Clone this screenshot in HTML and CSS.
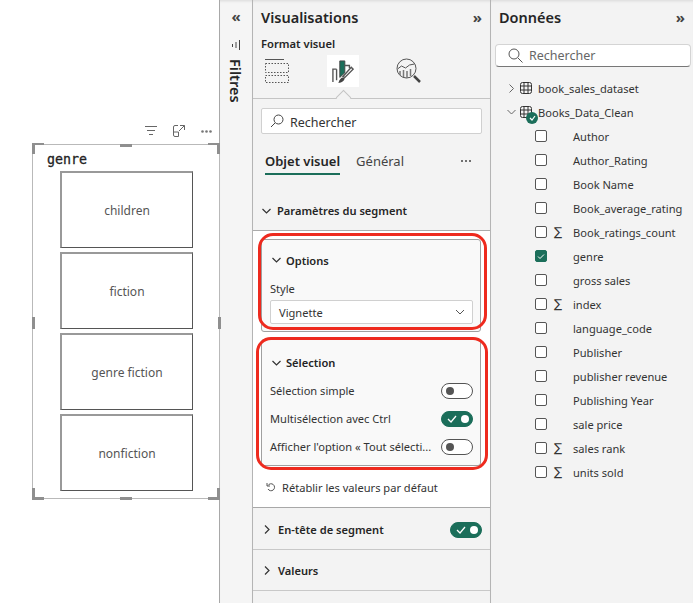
FILE: index.html
```html
<!DOCTYPE html>
<html lang="fr">

<head>
    <meta charset="UTF-8">
    <title>Visualisations</title>
    <link rel="stylesheet" href="styles.css">
</head>

<body>
    <div class="app">

        <!-- zone du rapport -->
        <div class="canvas">
            <div class="visual-icons">
                <svg width="12" height="10" viewBox="0 0 12 10"><path d="M0 .5h12M2 4.500h8M4 8.500h4" stroke="#666" fill="none"/></svg>
                <svg width="12" height="12" viewBox="0 0 12 12"><path d="M5 .5H2A1.500 1.500 0 0 0 .5 2v8A1.500 1.500 0 0 0 2 11.500h3.500V7H.5M7 .5h4.500V5M11.500 .5L6 6" stroke="#666" fill="none"/></svg>
                <svg width="11" height="3" viewBox="0 0 11 3"><circle cx="1.500" cy="1.500" r="1.300" fill="#777"/><circle cx="5.500" cy="1.500" r="1.300" fill="#777"/><circle cx="9.500" cy="1.500" r="1.300" fill="#777"/></svg>
            </div>
            <div class="slicer">
                <i class="grip tl"></i><i class="grip tr"></i><i class="grip bl"></i><i class="grip br"></i>
                <i class="mid top"></i><i class="mid bottom"></i><i class="mid left"></i><i class="mid right"></i>
                <div class="slicer-title">genre</div>
                <div class="tile">children</div>
                <div class="tile">fiction</div>
                <div class="tile">genre fiction</div>
                <div class="tile">nonfiction</div>
            </div>
        </div>

        <!-- filtres replie -->
        <div class="filters">
            <span class="chevrons">«</span>
            <svg class="filters-icon" width="10" height="10" viewBox="0 0 10 10"><path d="M1.500 4v3M5 2v6M8.500 0v10" stroke="#444" fill="none"/></svg>
            <span class="filters-label">Filtres</span>
        </div>

        <!-- visualisations -->
        <div class="vis">
            <div class="panel-head"><span>Visualisations</span><span class="chevrons">»</span></div>
            <div class="vis-sub">Format visuel</div>
            <div class="vis-tabs">
                <div class="icon-tab">
                    <svg width="24" height="24" viewBox="0 0 24 24"><path d="M0 .5h19" stroke="#555" fill="none"/><path d="M.5 4.500h23v9H.5zM.5 16.500h23v7H.5z" stroke="#555" stroke-dasharray="1.500 1.500" fill="none"/></svg>
                </div>
                <div class="icon-tab active">
                    <svg width="22" height="24" viewBox="0 0 24 26"><path d="M1 25V11h4M5 23V11" stroke="#555" stroke-width="1.500" fill="none"/><path d="M8.500 20V2h5.500v13z" fill="#1b6e5a" stroke="#444"/><path d="M14 7h5v3" stroke="#555" stroke-width="1.500" fill="none"/><path d="M12 19l9-10 2 2-9 9z" fill="#fff" stroke="#555" stroke-width="1.500"/><path d="M7 26c1-4 3-6 5-6l2 1c-1 3-3 5-7 5z" fill="#444"/></svg>
                </div>
                <div class="icon-tab">
                    <svg width="26" height="26" viewBox="0 0 26 26"><circle cx="10.500" cy="10.500" r="9.500" stroke="#555" fill="none"/><path d="M1.500 11l4-3 4 2 4-3 5-1" stroke="#555" fill="none"/><path d="M4 13v4M7.500 12v7M11 13v7M14.500 11v7" stroke="#777" stroke-width="1.500" fill="none"/><path d="M18 18l6 6" stroke="#444" stroke-width="2.500" fill="none"/></svg>
                </div>
                <i class="notch"></i>
            </div>
            <div class="vis-search">
                <svg width="14" height="14" viewBox="0 0 14 14"><circle cx="8.500" cy="5.500" r="4.500" stroke="#444" fill="none"/><path d="M5 9l-4 4" stroke="#444" fill="none"/></svg>
                <span>Rechercher</span>
            </div>
            <div class="format-tabs">
                <span class="format-tab on">Objet visuel</span>
                <span class="format-tab">Général</span>
                <svg class="format-more" width="10" height="2" viewBox="0 0 10 2"><circle cx="1" cy="1" r="1" fill="#444"/><circle cx="5" cy="1" r="1" fill="#444"/><circle cx="9" cy="1" r="1" fill="#444"/></svg>
            </div>

            <div class="section-head first">
                <svg class="chev" width="9" height="6" viewBox="0 0 9 6"><path d="M.5 1l4 4 4-4" stroke="#333" stroke-width="1.200" fill="none"/></svg>
                Paramètres du segment
            </div>
            <div class="section-body">
                <div class="card options">
                    <div class="card-head">
                        <svg class="chev" width="9" height="6" viewBox="0 0 9 6"><path d="M.5 1l4 4 4-4" stroke="#333" stroke-width="1.200" fill="none"/></svg>
                        Options
                    </div>
                    <div class="field-label">Style</div>
                    <div class="select">Vignette
                        <svg width="10" height="6" viewBox="0 0 10 6"><path d="M1 1l4 4 4-4" stroke="#555" fill="none"/></svg>
                    </div>
                </div>
                <div class="card selection">
                    <div class="card-head">
                        <svg class="chev" width="9" height="6" viewBox="0 0 9 6"><path d="M.5 1l4 4 4-4" stroke="#333" stroke-width="1.200" fill="none"/></svg>
                        Sélection
                    </div>
                    <div class="toggle-row"><span>Sélection simple</span><span class="toggle"></span></div>
                    <div class="toggle-row"><span>Multisélection avec Ctrl</span>
                        <span class="toggle on"><svg width="10" height="8" viewBox="0 0 10 8"><path d="M1 4l3 3 5-6" stroke="#fff" stroke-width="1.300" fill="none"/></svg></span>
                    </div>
                    <div class="toggle-row"><span>Afficher l'option « Tout sélecti...</span><span class="toggle"></span></div>
                </div>
                <div class="reset">
                    <svg width="10" height="10" viewBox="0 0 10 10"><path d="M2 3.500a3.500 3.500 0 1 1 0 3.500M1 1v3h3" stroke="#555" fill="none"/></svg>
                    Rétablir les valeurs par défaut
                </div>
            </div>
            <div class="section-head closed tall">
                <svg class="chev" width="6" height="9" viewBox="0 0 6 9"><path d="M1 .5l4 4-4 4" stroke="#333" stroke-width="1.200" fill="none"/></svg>
                En-tête de segment
                <span class="toggle on push"><svg width="10" height="8" viewBox="0 0 10 8"><path d="M1 4l3 3 5-6" stroke="#fff" stroke-width="1.300" fill="none"/></svg></span>
            </div>
            <div class="section-head closed">
                <svg class="chev" width="6" height="9" viewBox="0 0 6 9"><path d="M1 .5l4 4-4 4" stroke="#333" stroke-width="1.200" fill="none"/></svg>
                Valeurs
            </div>

            <i class="ring ring-options"></i>
            <i class="ring ring-selection"></i>
        </div>

        <!-- donnees -->
        <div class="data">
            <div class="panel-head"><span>Données</span><span class="chevrons">»</span></div>
            <div class="data-search">
                <svg width="15" height="15" viewBox="0 0 15 15"><circle cx="6" cy="6" r="5" stroke="#555" fill="none"/><path d="M10 10l4.500 4.500" stroke="#555" fill="none"/></svg>
                Rechercher
            </div>
            <div class="tree">
                <div class="table-row">
                    <svg class="twist" width="6" height="9" viewBox="0 0 6 9"><path d="M1 .5l4 4-4 4" stroke="#666" fill="none"/></svg>
                    <svg class="grid-icon" width="12" height="12" viewBox="0 0 12 12"><rect x=".5" y=".5" width="11" height="11" rx="2" stroke="#333" fill="none"/><path d="M4 .5v11M8 .5v11M.5 4h11M.5 8h11" stroke="#333" fill="none"/></svg>
                    book_sales_dataset
                </div>
                <div class="table-row open">
                    <svg class="twist" width="9" height="6" viewBox="0 0 9 6"><path d="M.5 1l4 4 4-4" stroke="#666" fill="none"/></svg>
                    <span class="grid-wrap">
                        <svg class="grid-icon" width="12" height="12" viewBox="0 0 12 12"><rect x=".5" y=".5" width="11" height="11" rx="2" stroke="#333" fill="none"/><path d="M4 .5v11M8 .5v11M.5 4h11M.5 8h11" stroke="#333" fill="none"/></svg>
                        <span class="badge"><svg width="7" height="6" viewBox="0 0 7 6"><path d="M1 3l2 2 3-4" stroke="#fff" stroke-width="1.200" fill="none"/></svg></span>
                    </span>
                    Books_Data_Clean
                </div>
                <div class="field"><i class="check"></i><span class="sum"></span>Author</div>
                <div class="field"><i class="check"></i><span class="sum"></span>Author_Rating</div>
                <div class="field"><i class="check"></i><span class="sum"></span>Book Name</div>
                <div class="field"><i class="check"></i><span class="sum"></span>Book_average_rating</div>
                <div class="field"><i class="check"></i><span class="sum">∑</span>Book_ratings_count</div>
                <div class="field"><i class="check on"><svg width="8" height="7" viewBox="0 0 8 7"><path d="M1 3.500l2 2 4-4" stroke="#fff" fill="none"/></svg></i><span class="sum"></span>genre</div>
                <div class="field"><i class="check"></i><span class="sum"></span>gross sales</div>
                <div class="field"><i class="check"></i><span class="sum">∑</span>index</div>
                <div class="field"><i class="check"></i><span class="sum"></span>language_code</div>
                <div class="field"><i class="check"></i><span class="sum"></span>Publisher</div>
                <div class="field"><i class="check"></i><span class="sum"></span>publisher revenue</div>
                <div class="field"><i class="check"></i><span class="sum"></span>Publishing Year</div>
                <div class="field"><i class="check"></i><span class="sum"></span>sale price</div>
                <div class="field"><i class="check"></i><span class="sum">∑</span>sales rank</div>
                <div class="field"><i class="check"></i><span class="sum">∑</span>units sold</div>
            </div>
        </div>

    </div>
</body>

</html>
```

FILE: styles.css
```css
/*general*/
html, body {
    margin: 0;
    height: 100%;
    overflow: hidden;
}

body {
    font-family: "Noto Sans", "Open Sans", sans-serif;
    font-size: 11.1px;
    color: #333;
    background-color: white;
}

.app {
    display: flex;
    height: 603px;
}

/*zone du rapport*/
.canvas {
    width: 220px;
    flex: none;
    padding: 124px 0 0 32px;
    box-sizing: border-box;
    border-right: 1px solid #a8a8a8;
}

.visual-icons {
    display: flex;
    align-items: center;
    justify-content: flex-end;
    gap: 16px;
    height: 14px;
    padding-right: 7px;
    margin-bottom: 6px;
}

.slicer {
    position: relative;
    width: 186px;
    height: 353px;
    border: 1px solid #b9b9b9;
}

.slicer-title {
    height: 26px;
    padding: 6px 0 0 14px;
    box-sizing: border-box;
    font-family: "DejaVu Sans Mono", monospace;
    font-size: 13.3px;
    line-height: 17px;
    color: #222;
    -webkit-text-stroke: 0.3px #222;
}

.tile {
    display: flex;
    align-items: center;
    justify-content: center;
    width: 133px;
    height: 77px;
    margin: 0 0 4px 27px;
    box-sizing: border-box;
    border: 1px solid #555;
    border-top: 2px solid #999;
    border-left: 2px solid #999;
    font-size: 12px;
    color: #555;
}

/*poignees du segment*/
.grip {
    position: absolute;
    width: 9px;
    height: 9px;
    border: 0 solid #8f8f8f;
}
.grip.tl { left: -1px; top: -2px; border-width: 2px 0 0 3px; }
.grip.tr { right: -1px; top: -2px; border-width: 2px 3px 0 0; }
.grip.bl { left: -1px; bottom: -2px; border-width: 0 0 3px 3px; }
.grip.br { right: -1px; bottom: -2px; border-width: 0 3px 3px 0; }

.mid {
    position: absolute;
    background-color: #8f8f8f;
}
.mid.top, .mid.bottom { left: 87px; width: 12px; height: 3px; }
.mid.top { top: -1px; }
.mid.bottom { bottom: -2px; }
.mid.left, .mid.right { top: 172px; width: 3px; height: 12px; }
.mid.left { left: -1px; }
.mid.right { right: -2px; }

/*filtres*/
.filters {
    width: 32px;
    flex: none;
    display: flex;
    flex-direction: column;
    align-items: center;
    background-color: #f5f5f5;
    box-shadow: inset 0 3px 3px -2px #d8d8d8;
}

.filters .chevrons {
    height: 34px;
    line-height: 32px;
}

.chevrons {
    font-size: 15px;
    font-weight: 700;
    color: #444;
}

.filters-icon {
    margin: 6px 0 9px;
}

.filters-label {
    writing-mode: vertical-rl;
    font-size: 14.5px;
    font-weight: 600;
    color: #252525;
}

/*visualisations*/
.vis {
    position: relative;
    width: 239px;
    flex: none;
    box-sizing: border-box;
    border-left: 1px solid #b4b4b4;
    border-right: 1px solid #b4b4b4;
    background-color: #f3f3f3;
    box-shadow: inset 0 3px 3px -2px #d8d8d8;
}

.panel-head {
    display: flex;
    align-items: center;
    justify-content: space-between;
    height: 34px;
    padding: 0 8px;
    font-size: 14.5px;
    font-weight: 600;
    color: #252525;
}

.vis-sub {
    height: 20px;
    padding-left: 8px;
    font-size: 11.2px;
    font-weight: 600;
    line-height: 20px;
    color: #252525;
}

.vis-tabs {
    position: relative;
    display: flex;
    gap: 34px;
    height: 45px;
    padding: 1px 0 0 8px;
    box-sizing: border-box;
    border-bottom: 1px solid #c4c4c4;
}

.icon-tab {
    display: flex;
    align-items: center;
    justify-content: center;
    width: 32px;
    height: 32px;
}

.icon-tab.active {
    background-color: white;
}

.notch {
    position: absolute;
    left: 85px;
    bottom: -5px;
    width: 10px;
    height: 10px;
    background-color: #f3f3f3;
    border: solid #c4c4c4;
    border-width: 1px 0 0 1px;
    transform: rotate(45deg);
}

.vis-search {
    display: flex;
    align-items: center;
    gap: 6px;
    height: 26px;
    margin: 9px 8px 0;
    padding-left: 8px;
    box-sizing: border-box;
    border: 1px solid #d0d0d0;
    border-radius: 2px;
    background-color: white;
    font-size: 12.5px;
}

.vis-search span {
    padding-top: 2px;
}

.format-tabs {
    display: flex;
    align-items: flex-start;
    gap: 16px;
    height: 42px;
    padding: 14px 0 0 12px;
    box-sizing: border-box;
}

.format-tab {
    height: 27px;
    box-sizing: border-box;
    font-size: 13px;
    line-height: 27px;
    color: #444;
}

.format-tab.on {
    border-bottom: 2px solid #1b6e5a;
    line-height: 26px;
    font-weight: 600;
    color: #252525;
}

.format-more {
    margin: 12px 19px 0 auto;
}

.section-head {
    display: flex;
    align-items: center;
    gap: 6px;
    padding-left: 9px;
    font-size: 11.1px;
    font-weight: 600;
    color: #252525;
    box-sizing: border-box;
    border-bottom: 1px solid #c8c8c8;
}

.section-head.first {
    height: 55px;
    padding-top: 15px;
    border-bottom-color: #ababab;
}

.section-head.closed {
    height: 41px;
    gap: 8px;
    padding-top: 1px;
    padding-left: 11px;
}

.section-head.closed.tall {
    height: 42px;
    padding-top: 2px;
}

.toggle.push {
    margin-left: auto;
    margin-right: 8px;
}

.section-body {
    height: 277px;
    padding: 8px 9px 0 8px;
    box-sizing: border-box;
    background-color: white;
    border-bottom: 1px solid #a8a8a8;
}

/*tarjetas*/
.card {
    box-sizing: border-box;
    border: 1px solid #a0a0a0;
    border-radius: 3px;
    background-color: #f9f9f9;
}

.card.options {
    height: 93px;
    margin-bottom: 7px;
}

.card.selection {
    height: 127px;
}

.card-head {
    display: flex;
    align-items: center;
    gap: 5px;
    height: 40px;
    padding-left: 10px;
    font-size: 11.1px;
    font-weight: 600;
    color: #252525;
}

.field-label {
    height: 20px;
    padding-left: 8px;
    line-height: 18px;
}

.select {
    display: flex;
    align-items: center;
    justify-content: space-between;
    height: 24px;
    margin: 0 7px 0 8px;
    padding: 0 7px 0 8px;
    box-sizing: border-box;
    border: 1px solid #d0d0d0;
    border-radius: 2px;
    background-color: white;
    color: #333;
}

.card.selection .card-head {
    height: 37px;
    padding-top: 9px;
    box-sizing: border-box;
    align-items: flex-start;
    line-height: 28px;
}

.card.selection .chev {
    margin-top: 11px;
}

.toggle-row {
    display: flex;
    align-items: center;
    justify-content: space-between;
    height: 28px;
    padding: 0 7px 0 8px;
    white-space: nowrap;
}

.toggle-row > span:first-child {
    margin-top: -1px;
}

.toggle {
    position: relative;
    flex: none;
    display: block;
    width: 32px;
    height: 16px;
    box-sizing: border-box;
    border: 1px solid #555;
    border-radius: 8px;
    background-color: white;
}

.toggle::after {
    content: "";
    position: absolute;
    left: 4px;
    top: 3px;
    width: 8px;
    height: 8px;
    border-radius: 50%;
    background-color: #555;
}

.toggle.on {
    border-color: #1b6e5a;
    background-color: #1b6e5a;
}

.toggle.on::after {
    left: auto;
    right: 3px;
    background-color: white;
}

.toggle svg {
    position: absolute;
    left: 5px;
    top: 3px;
}

.reset {
    display: flex;
    align-items: center;
    gap: 6px;
    height: 28px;
    margin-top: 7px;
    padding-left: 5px;
}

/*marcas rojas sobre el panel*/
.ring {
    position: absolute;
    box-sizing: border-box;
    border: 3px solid #ee2a1e;
    border-radius: 15px;
}

.ring-options {
    left: 5px;
    top: 233px;
    width: 229px;
    height: 97px;
}

.ring-selection {
    left: 3px;
    top: 337px;
    width: 232px;
    height: 133px;
}

/*datos*/
.data {
    flex: 1;
    background-color: #f3f3f3;
    box-shadow: inset 0 3px 3px -2px #d8d8d8;
}

.data-search {
    display: flex;
    align-items: center;
    gap: 6px;
    height: 23px;
    margin: 10px 2px 0 4px;
    padding-left: 12px;
    box-sizing: border-box;
    border: 1px solid #d4d4d4;
    border-bottom-color: #777;
    border-radius: 4px;
    background-color: white;
    font-size: 12.5px;
    color: #666;
}

.tree {
    padding-top: 9px;
}

.table-row, .field {
    display: flex;
    align-items: center;
    height: 24px;
}

.table-row {
    position: relative;
    padding-left: 16px;
}

.twist {
    width: 9px;
    margin-right: 4px;
}

.grid-icon {
    margin-right: 6px;
}

.grid-wrap {
    position: relative;
    display: flex;
}

.badge {
    position: absolute;
    left: 6px;
    top: 6px;
    display: flex;
    align-items: center;
    justify-content: center;
    width: 12px;
    height: 12px;
    border-radius: 50%;
    background-color: #1b6e5a;
}

.field {
    padding-left: 44px;
}

.check {
    display: flex;
    align-items: center;
    justify-content: center;
    width: 12px;
    height: 12px;
    box-sizing: border-box;
    border: 1px solid #555;
    border-radius: 2px;
    background-color: white;
}

.check.on {
    border-color: #1b6e5a;
    background-color: #1b6e5a;
}

.sum {
    width: 26px;
    padding-left: 7px;
    box-sizing: border-box;
    font-family: "DejaVu Sans", sans-serif;
    font-size: 12px;
    line-height: 14px;
    color: #333;
}
```
